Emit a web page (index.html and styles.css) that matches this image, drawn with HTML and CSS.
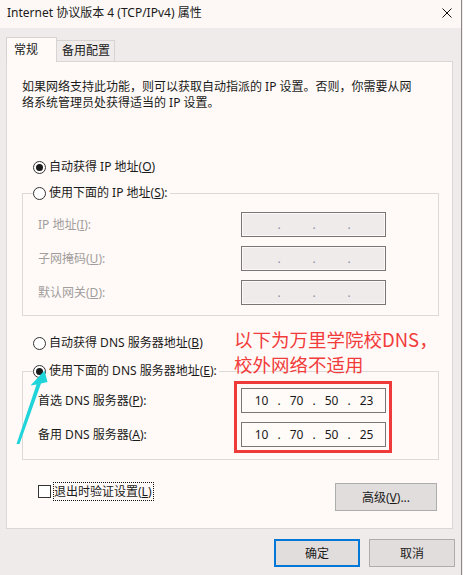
FILE: index.html
```html
<!DOCTYPE html>
<html lang="zh-CN">
<head>
    <meta charset="UTF-8">
    <title>Internet 协议版本 4 (TCP/IPv4) 属性</title>
    <link rel="stylesheet" href="styles.css">
</head>
<body>
    <div class="window">
        <div class="titlebar">
            <span class="title">Internet 协议版本 4 (TCP/IPv4) 属性</span>
            <svg class="close" width="10" height="10" viewBox="0 0 10 10">
                <path d="M0.5 0.5 L9.5 9.5 M9.5 0.5 L0.5 9.5" stroke="#111" stroke-width="1" fill="none"/>
            </svg>
        </div>

        <div class="content">
            <div class="tabs">
                <div class="tab active">常规</div>
                <div class="tab">备用配置</div>
            </div>

            <div class="panel">
                <p class="desc">如果网络支持此功能，则可以获取自动指派的 IP 设置。否则，你需要从网<br>络系统管理员处获得适当的 IP 设置。</p>

                <div class="radio-row first">
                    <span class="radio checked"></span>
                    <span>自动获得 IP 地址(<u>O</u>)</span>
                </div>

                <fieldset class="group">
                    <legend class="radio-row">
                        <span class="radio"></span>
                        <span>使用下面的 IP 地址(<u>S</u>):</span>
                    </legend>
                    <div class="field-row disabled">
                        <span>IP 地址(<u>I</u>):</span>
                        <div class="ip-box"><span></span><i>.</i><span></span><i>.</i><span></span><i>.</i><span></span></div>
                    </div>
                    <div class="field-row disabled">
                        <span>子网掩码(<u>U</u>):</span>
                        <div class="ip-box"><span></span><i>.</i><span></span><i>.</i><span></span><i>.</i><span></span></div>
                    </div>
                    <div class="field-row disabled">
                        <span>默认网关(<u>D</u>):</span>
                        <div class="ip-box"><span></span><i>.</i><span></span><i>.</i><span></span><i>.</i><span></span></div>
                    </div>
                </fieldset>

                <div class="radio-row dns-auto">
                    <span class="radio"></span>
                    <span>自动获得 DNS 服务器地址(<u>B</u>)</span>
                </div>

                <fieldset class="group dns">
                    <legend class="radio-row">
                        <span class="radio checked"></span>
                        <span>使用下面的 DNS 服务器地址(<u>E</u>):</span>
                    </legend>
                    <div class="field-row">
                        <span>首选 DNS 服务器(<u>P</u>):</span>
                        <div class="ip-box"><span>10</span><i>.</i><span>70</span><i>.</i><span>50</span><i>.</i><span>23</span></div>
                    </div>
                    <div class="field-row">
                        <span>备用 DNS 服务器(<u>A</u>):</span>
                        <div class="ip-box"><span>10</span><i>.</i><span>70</span><i>.</i><span>50</span><i>.</i><span>25</span></div>
                    </div>
                </fieldset>

                <div class="options-row">
                    <label class="check-row">
                        <span class="checkbox"></span>
                        <span class="focus">退出时验证设置(<u>L</u>)</span>
                    </label>
                    <button class="btn advanced">高级(<u>V</u>)...</button>
                </div>
            </div>

            <div class="footer">
                <button class="btn primary">确定</button>
                <button class="btn">取消</button>
            </div>
        </div>

        <!-- annotation drawn on top of the screenshot -->
        <div class="note">以下为万里学院校DNS，<br>校外网络不适用</div>
        <div class="note-box"></div>
        <svg class="note-arrow" width="60" height="90" viewBox="0 360 60 90">
            <polygon points="16.5,444 36.5,384.5 30.5,385.5 44.5,370.5 47.5,382 41,383.5 19.5,444" fill="#1fd5da"/>
        </svg>
    </div>
</body>
</html>
```

FILE: styles.css
```css
body {
    margin: 0;
    background-color: #efebea;
    font-family: "Noto Sans", "Noto Sans CJK SC", sans-serif;
    font-size: 12px;
    line-height: 16px;
    color: #1a1a1a;
}
.window {
    width: 462px;
    min-height: 575px;
    box-sizing: border-box;
    border-right: 1px solid #8c8888;
    position: relative;
}
.titlebar {
    height: 28px;
    box-sizing: border-box;
    padding: 0 9px 2px 7px;
    background-color: #fdf8f5;
    display: flex;
    align-items: center;
    justify-content: space-between;
}
.content {
    padding: 9px 8px 0 6px;
}
.tabs {
    display: flex;
    align-items: flex-end;
}
.tab {
    height: 21px;
    box-sizing: border-box;
    padding: 0 4px 0 5px;
    margin-left: -1px;
    border: 1px solid #d6d3d2;
    border-bottom: none;
    background-color: #efebea;
    display: flex;
    align-items: center;
}
.tab.active {
    height: 25px;
    margin-left: 0;
    margin-bottom: -1px;
    padding: 0 18px 0 7px;
    background-color: #fffaf7;
    position: relative;
    z-index: 1;
}
.panel {
    border: 1px solid #d9d6d5;
    background-color: #fffaf7;
    padding: 17px 13px 17px 15px;
}
.desc {
    margin: 0;
}
.radio-row {
    display: flex;
    align-items: center;
    gap: 3px;
    margin-left: 11px;
}
.radio-row.first {
    margin-top: 48px;
}
.radio {
    width: 13px;
    height: 13px;
    box-sizing: border-box;
    border: 1px solid #333;
    border-radius: 50%;
    background-color: #fff;
    display: flex;
    align-items: center;
    justify-content: center;
}
.radio.checked::after {
    content: "";
    width: 7px;
    height: 7px;
    border-radius: 50%;
    background-color: #1a1a1a;
}
.group {
    margin: 10px 0 0 0;
    padding: 11px 52px 10px 15px;
    border: 1px solid #dcd9d8;
    min-width: 0;
}
.group legend {
    padding: 0 2px 0 0;
    margin-left: -5px;
    background-color: #fffaf7;
}
.group.dns {
    margin-top: 12px;
    padding-top: 9px;
    padding-bottom: 12px;
}
.dns-auto {
    margin-top: 19px;
}
.field-row {
    display: grid;
    grid-template-columns: 1fr 145px;
    align-items: center;
    margin-bottom: 9px;
}
.field-row:last-child {
    margin-bottom: 0;
}
.field-row.disabled {
    color: #a19d9c;
}
.ip-box {
    height: 25px;
    box-sizing: border-box;
    border: 1px solid #7a7675;
    background-color: #fffbf8;
    padding-left: 4px;
    display: flex;
    align-items: center;
    color: #1a1a1a;
}
.ip-box span {
    width: 31px;
    text-align: center;
}
.ip-box i {
    width: 4px;
    font-style: normal;
    text-align: center;
}
.disabled .ip-box {
    background-color: #efebea;
    box-shadow: inset 0 0 0 1px #fbf8f7;
    color: #8d8fa6;
}
.options-row {
    margin-top: 23px;
    display: flex;
    align-items: flex-start;
    justify-content: space-between;
}
.check-row {
    display: flex;
    align-items: center;
    gap: 3px;
    padding-left: 16px;
}
.checkbox {
    width: 13px;
    height: 13px;
    box-sizing: border-box;
    border: 1px solid #333;
    background-color: #fff;
}
.focus {
    outline: 1px dotted #111;
    padding: 1px 1px 0 0;
}
.btn {
    height: 28px;
    width: 86px;
    box-sizing: border-box;
    border: 1px solid #adadad;
    background-color: #e1dddc;
    font-family: inherit;
    font-size: 12px;
    color: #1a1a1a;
    padding: 0;
}
.btn.advanced {
    width: 102px;
    margin-right: 2px;
}
.btn.primary {
    border: 2px solid #0078d7;
}
.footer {
    margin: 10px -2px 0 0;
    display: flex;
    justify-content: flex-end;
    gap: 9px;
}
.note {
    position: absolute;
    left: 234px;
    top: 327px;
    font-family: "Noto Sans CJK SC", sans-serif;
    font-size: 18.5px;
    line-height: 25px;
    color: #f23c3c;
}
.note-box {
    position: absolute;
    left: 234px;
    top: 381px;
    width: 158px;
    height: 72px;
    box-sizing: border-box;
    border: 3px solid #ef3a3a;
}
.note-arrow {
    position: absolute;
    left: 0;
    top: 360px;
}
```
